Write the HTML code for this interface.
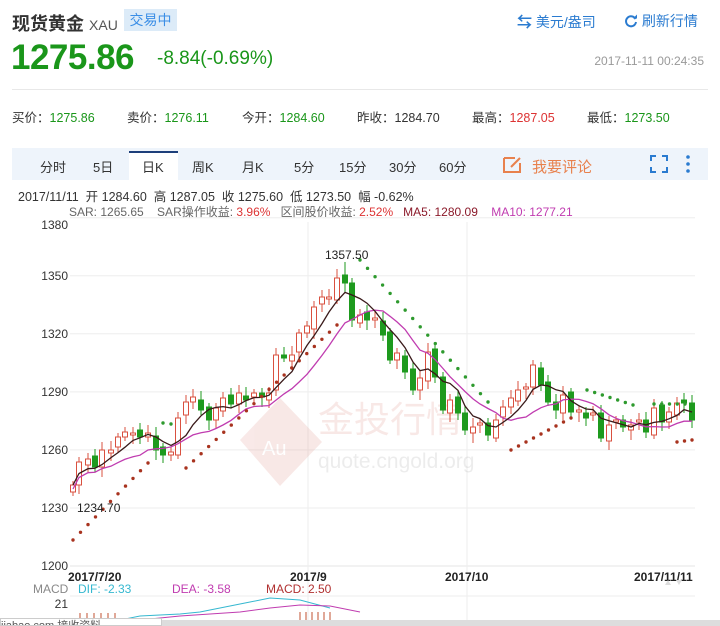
<!DOCTYPE html>
<html><head><meta charset="utf-8"><style>
*{margin:0;padding:0;box-sizing:border-box}
body{width:720px;height:626px;overflow:hidden;background:#fff;font-family:"Liberation Sans","Noto Sans CJK SC",sans-serif;position:relative;color:#333}
.a{position:absolute;white-space:nowrap}
</style></head><body>
<div class="a" style="left:12px;top:10px;font-size:18px;font-weight:bold;color:#333">现货黄金 <span style="font-weight:normal;font-size:14px;color:#555">XAU</span></div>
<div class="a" style="left:124px;top:9px;width:53px;height:22px;background:#dcebf8;color:#3a8ee6;font-size:14px;line-height:22px;text-align:center">交易中</div>
<div class="a" style="left:517px;top:11px;font-size:14px;color:#2a7bd0"><b style="font-size:15px">⇆</b> 美元/盎司</div>
<div class="a" style="left:624px;top:11px;font-size:14px;color:#2a7bd0"><svg width="14" height="14" viewBox="0 0 14 14" style="vertical-align:-2px"><path d="M11.5 5A5 5 0 1 0 12 8" fill="none" stroke="#2a7bd0" stroke-width="2"/><path d="M9 4.5h4v-4z" fill="#2a7bd0"/></svg> 刷新行情</div>
<div class="a" style="left:11px;top:38px;font-size:35px;font-weight:bold;color:#1a961a;letter-spacing:-0.5px">1275.86</div>
<div class="a" style="left:157px;top:48px;font-size:19px;color:#1a961a">-8.84(-0.69%)</div>
<div class="a" style="right:16px;top:54px;font-size:12px;color:#999">2017-11-11 00:24:35</div>
<div class="a" style="left:12px;top:89px;width:696px;height:1px;background:#e8e8e8"></div>
<div class="a" style="left:12px;top:107px;font-size:12.5px;color:#333">买价：<span style="color:#1a961a">1275.86</span></div>
<div class="a" style="left:127px;top:107px;font-size:12.5px">卖价：<span style="color:#1a961a">1276.11</span></div>
<div class="a" style="left:242px;top:107px;font-size:12.5px">今开：<span style="color:#1a961a">1284.60</span></div>
<div class="a" style="left:357px;top:107px;font-size:12.5px">昨收：1284.70</div>
<div class="a" style="left:472px;top:107px;font-size:12.5px">最高：<span style="color:#d33">1287.05</span></div>
<div class="a" style="left:587px;top:107px;font-size:12.5px">最低：<span style="color:#1a961a">1273.50</span></div>
<div class="a" style="left:12px;top:148px;width:696px;height:32px;background:#eef4fb"></div>
<div class="a" style="left:129px;top:151px;width:49px;height:29px;background:#fff;border-top:2px solid #1d3f7a"></div>
<div class="a" style="top:157px;left:0;font-size:13px;color:#333;width:720px;height:20px">
<span class="a" style="left:40px">分时</span><span class="a" style="left:93px">5日</span><span class="a" style="left:142px">日K</span><span class="a" style="left:192px">周K</span><span class="a" style="left:242px">月K</span><span class="a" style="left:294px">5分</span><span class="a" style="left:339px">15分</span><span class="a" style="left:389px">30分</span><span class="a" style="left:439px">60分</span>
<span class="a" style="left:532px;top:-1px;color:#e8814d;font-size:15px">我要评论</span></div>
<svg class="a" style="left:502px;top:154px" width="22" height="20"><path d="M2 4h11M2 4v14h16v-9" fill="none" stroke="#e8814d" stroke-width="2"/><path d="M9 13l9-9" stroke="#e8814d" stroke-width="2"/></svg>
<svg class="a" style="left:650px;top:155px" width="18" height="18"><path d="M1 6V1h5M12 1h5v5M17 12v5h-5M6 17H1v-5" fill="none" stroke="#2a7bd0" stroke-width="2"/></svg>
<svg class="a" style="left:685px;top:154px" width="6" height="20"><circle cx="3" cy="3" r="1.8" fill="#2a7bd0"/><circle cx="3" cy="10" r="1.8" fill="#2a7bd0"/><circle cx="3" cy="17" r="1.8" fill="#2a7bd0"/></svg>
<div class="a" style="left:18px;top:186px;font-size:12.5px;color:#333">2017/11/11&nbsp; 开 1284.60&nbsp; 高 1287.05&nbsp; 收 1275.60&nbsp; 低 1273.50&nbsp; 幅 -0.62%</div>
<div class="a" style="left:69px;top:203px;font-size:12px;color:#666">SAR: 1265.65&nbsp;&nbsp;&nbsp; SAR操作收益: <span style="color:#d33">3.96%</span>&nbsp;&nbsp; 区间股价收益: <span style="color:#d33">2.52%</span>&nbsp;&nbsp; <span style="color:#8b1a2a">MA5: 1280.09</span>&nbsp;&nbsp;&nbsp; <span style="color:#c03cb0">MA10: 1277.21</span></div>
<svg id="ch" class="a" style="left:0;top:0" width="720" height="626"></svg>
<div class="a" style="left:0;top:620px;width:720px;height:6px;background:#ddd"></div>
<div class="a" style="left:0;top:618px;width:162px;height:8px;background:#fff;border:1px solid #ccc;font-size:11px;line-height:14px;overflow:hidden;color:#555">iiabao.com 接收资料</div>
<script>
var s=document.getElementById('ch'),h='';
function Y(v){return 566-(v-1200)*1.935}
[1380,1350,1320,1290,1260,1230,1200].forEach(function(v){var y=Y(v);h+='<line x1="70" x2="695" y1="'+y+'" y2="'+y+'" stroke="#eee"/><text x="68" y="'+(Math.max(y,225)+4)+'" font-size="12" text-anchor="end" fill="#333">'+v+'</text>';});
h+='<line x1="70" x2="695" y1="566" y2="566" stroke="#e4e4e4"/>';
[308,467].forEach(function(x){h+='<line x1="'+x+'" x2="'+x+'" y1="222" y2="626" stroke="#eee"/>'});
h+='<line x1="70" x2="695" y1="596" y2="596" stroke="#eee"/>';
h+='<g opacity="0.13"><path d="M240 440L280 398L322 442L280 486Z" fill="#d0584a"/><text x="262" y="455" font-size="20" fill="#fff">Au</text><text x="318" y="432" font-size="36" fill="#d0584a" font-family="Noto Sans CJK SC,sans-serif">金投行情</text><text x="318" y="468" font-size="21" fill="#777">quote.cngold.org</text></g>';
var c=[[73,485],[79,462],[88,459],[95,467],[102,450],[111,450],[118,437],[125,432],[133,433],[140,437],[148,433],[156,450],[163,455],[171,452],[178,418],[186,402],[193,397],[201,410],[209,420],[216,408],[223,398],[231,404],[239,393],[246,400],[254,393],[262,397],[269,393],[276,355],[284,358],[292,355],[299,333],[307,326],[314,307],[322,297],[329,297],[337,278],[345,283],[352,320],[360,315],[367,320],[375,318],[383,335],[390,360],[397,353],[405,372],[413,390],[420,378],[428,352],[435,377],[443,410],[450,400],[458,413],[465,430],[473,427],[480,423],[488,435],[496,420],[503,407],[511,398],[518,390],[526,387],[533,365],[541,385],[548,402],[556,410],[563,395],[571,412],[579,410],[586,418],[593,413],[601,438],[609,425],[616,420],[623,427],[631,425],[639,420],[646,432],[654,408],[662,422],[669,412],[677,403],[684,403],[692,420]];
var pts5='',pts10='';
for(var i=0;i<c.length;i++){var x=c[i][0],cl=c[i][1],op=i?c[i-1][1]+((i%3)-1)*3:492;
if(Math.abs(op-cl)<2)op=cl+2;var up=cl<op,t=Math.min(op,cl),b=Math.max(op,cl),hi=t-4-(i*7%6),lo=b+4+(i*5%7);
var col=up?'#d9503f':'#1e9a1e';
h+='<line x1="'+x+'" x2="'+x+'" y1="'+hi+'" y2="'+lo+'" stroke="'+col+'"/>';
h+='<rect x="'+(x-2.5)+'" y="'+t+'" width="5" height="'+(b-t)+'" fill="'+(up?'#fff':col)+'" stroke="'+col+'"/>';
var a=0,n=0;for(var j=Math.max(0,i-4);j<=i;j++){a+=c[j][1];n++}pts5+=x+','+(a/n)+' ';
a=0;n=0;for(j=Math.max(0,i-9);j<=i;j++){a+=c[j][1];n++}pts10+=x+','+(a/n+4)+' ';}
h+='<polyline points="'+pts10+'" fill="none" stroke="#c03cb0" stroke-width="1.3"/>';
h+='<polyline points="'+pts5+'" fill="none" stroke="#3a1a1a" stroke-width="1.3"/>';
function sar(x0,y0,x1,y1,col){var n=Math.round((x1-x0)/7.7);for(var k=0;k<=n;k++){h+='<circle cx="'+(x0+(x1-x0)*k/(n||1))+'" cy="'+(y0+(y1-y0)*k/(n||1))+'" r="1.7" fill="'+col+'"/>'}}
var R='#a8331f',G='#2e9a2e';
sar(73,540,148,463,R);sar(163,423,171,424,G);sar(186,468,337,325,R);sar(360,260,488,402,G);sar(511,450,571,418,R);sar(587,390,633,405,G);sar(654,404,685,404,G);sar(677,442,692,440,R);
h+='<text x="325" y="259" font-size="12" fill="#222">1357.50</text><line x1="345" x2="345" y1="262" y2="275" stroke="#1e9a1e"/>';
h+='<text x="77" y="512" font-size="12" fill="#222">1234.70</text>';
h+='<g font-size="12" font-weight="bold" fill="#222"><text x="68" y="581">2017/7/20</text><text x="290" y="581">2017/9</text><text x="445" y="581">2017/10</text><text x="634" y="581">2017/11/11</text></g>';
h+='<text x="33" y="593" font-size="12" fill="#888">MACD</text><text x="78" y="593" font-size="12" fill="#35b8d0">DIF: -2.33</text><text x="172" y="593" font-size="12" fill="#c03cb0">DEA: -3.58</text><text x="266" y="593" font-size="12" fill="#b03030">MACD: 2.50</text>';
h+='<text x="68" y="608" font-size="12" fill="#333" text-anchor="end">21</text>';
h+='<path d="M665 585l3-5 3 5zM676 580l3 5 3-5z" fill="#ddd"/>';
h+='<polyline points="120,620 140,616 180,614 200,612 230,606 250,602 270,598 300,600 330,608" fill="none" stroke="#35b8d0"/><polyline points="140,620 180,616 240,612 270,608 300,605 330,606 360,612" fill="none" stroke="#c03cb0"/>';
for(var k=0;k<6;k++){h+='<line x1="'+(80+k*7)+'" x2="'+(80+k*7)+'" y1="613" y2="620" stroke="#c05030"/><line x1="'+(300+k*6)+'" x2="'+(300+k*6)+'" y1="612" y2="620" stroke="#c05030"/>'}
s.innerHTML=h;
</script>
</body></html>
